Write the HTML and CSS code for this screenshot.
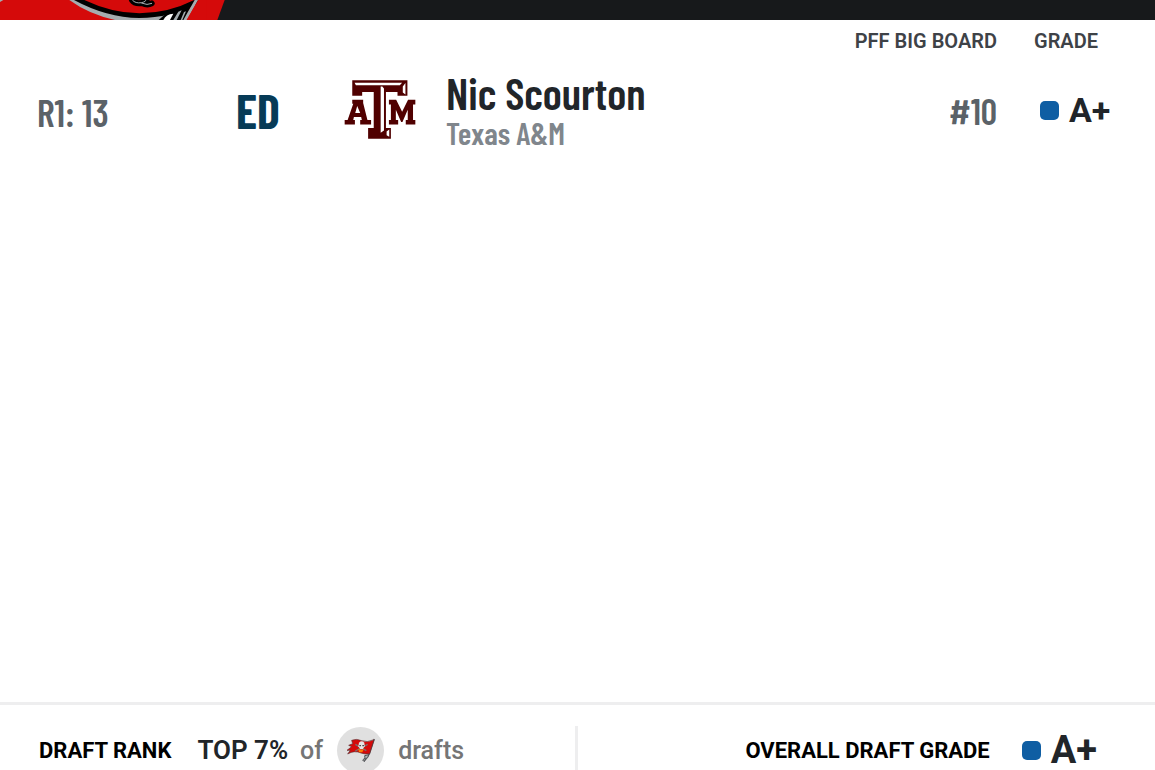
FILE: index.html
```html
<!DOCTYPE html>
<html lang="en">
<head>
<meta charset="UTF-8">
<meta name="viewport" content="width=device-width, initial-scale=1.0">
<title>Mock Draft Results</title>
<link rel="stylesheet" href="styles.css">
</head>
<body>
<header class="banner">
    <svg class="banner-logo" viewBox="0 0 720 60" aria-hidden="true">
        <path fill="#d50a0a" d="M0 0H674L652 60H0Z"/>
        <path fill="#a5acaf" d="M0 0H10L0 6Z"/>
        <path fill="#a5acaf" d="M208 0Q265 42 345 60H480L590 0Z"/>
        <path fill="#000" d="M580 6L552 60H476L492 46Z"/>
        <path fill="#d50a0a" stroke="#000" stroke-width="14" d="M222 -8Q320 46 418 47Q510 46 590 4L600 -20H222Z"/>
        <path fill="none" stroke="#a5acaf" stroke-width="9" d="M591 -3L554 62"/>
        <path fill="#d50a0a" d="M596 -3H620V60H560Z"/>
        <path fill="#fff" d="M490 60Q498 42 520 41L510 60Z"/>
        <path fill="#a5acaf" d="M520 60L535 35L545 31L530 60ZM542 60L552 36L558 34L547 60Z"/>
        <path fill="none" stroke="#000" stroke-width="18" stroke-linecap="round" d="M396 0Q404 12 426 9Q444 5 439 0M426 9Q442 17 455 10"/>
        <path fill="none" stroke="#a5acaf" stroke-width="3" d="M397 0Q406 11 425 8Q440 4 436 0M424 9Q442 17 456 10"/>
    </svg>
</header>

<main class="picks">
<table class="pick-table">
    <thead>
        <tr>
            <td class="col-pick"></td>
            <td class="col-pos"></td>
            <td class="col-logo"></td>
            <td></td>
            <th class="col-board" scope="col">PFF BIG BOARD</th>
            <th class="col-grade" scope="col">GRADE</th>
        </tr>
    </thead>
    <tbody>
        <tr>
            <td class="col-pick pick">R1: 13</td>
            <td class="position">ED</td>
            <td class="school-logo">
                <svg viewBox="26 30 218 179" role="img" aria-label="Texas A&amp;M">
                    <g fill="#500000">
                        <path d="M51 31H218V78H188V66H153V175H168V208H99V175H116V66H81V78H51Z"/>
                        <path fill-rule="evenodd" d="M51 90H84V100L97 151H108V165H75V151H80L78 142H56L54 151H59V165H28V151H37L54 102H51ZM66 109L60 130H75Z"/>
                        <path d="M162 90H184L202 126L220 90H242V104H235V151H242V165H213V151H219V120L203 157H199L183 120V151H190V165H162V151H168V104H162Z"/>
                    </g>
                    <path fill="#fff" d="M58 38H202L195 46H62ZM212 39V74L204 68V50ZM137 50H142L147 56V183L137 190ZM163 180V202L155 197V186Z"/>
                </svg>
            </td>
            <td class="player">
                <div class="player-name">Nic Scourton</div>
                <div class="player-school">Texas A&amp;M</div>
            </td>
            <td class="col-board board-rank">#10</td>
            <td class="col-grade"><div class="grade"><span class="dot"></span>A+</div></td>
        </tr>
    </tbody>
</table>
</main>

<footer class="summary">
    <div class="rank">
        <span class="label">DRAFT RANK</span>
        <span class="top">TOP 7%</span>
        <span class="muted">of</span>
        <span class="team">
            <svg viewBox="0 0 90 74" role="img" aria-label="Tampa Bay Buccaneers">
                <path fill="none" stroke="#55565a" stroke-width="4" d="M85 3L70 48L57 67"/>
                <path fill="#d50a0a" stroke="#5a3033" stroke-width="2" stroke-linejoin="round" d="M17 7Q31 1 47 8Q63 15 84 5L71 47Q57 50 45 45Q25 36 5 48L13 37L3 37L17 26L8 22L20 17Z"/>
                <path stroke="#77706f" stroke-width="4" d="M28 19L61 38M65 19L28 39"/>
                <path fill="#e5e5e5" d="M39 14Q47 6 55 14L56 25L50 34H43L37 25Z"/>
                <path fill="#4c494c" d="M40 21H45V25H40ZM49 21H54V25H49Z"/>
                <path fill="#ff7900" d="M37 32L47 36L54 32L49 43H39Z"/>
                <path fill="#b8babc" stroke="#4c4d50" stroke-width="3" d="M56 53L68 50L65 59L58 62L55 71L50 66L57 60Z"/>
            </svg>
        </span>
        <span class="muted">drafts</span>
    </div>
    <div class="overall">
        <span class="label">OVERALL DRAFT GRADE</span>
        <span class="grade grade-overall"><span class="dot"></span>A+</span>
    </div>
</footer>
</body>
</html>
```
FILE: styles.css
```css
* {
    box-sizing: border-box;
}

body {
    display: flex;
    flex-direction: column;
    height: 100vh;
    margin: 0;
    overflow: hidden;
    font-family: Roboto, sans-serif;
    color: #212529;
    background: #fff;
}

.banner {
    background: #17191b;
}

.banner-logo {
    display: block;
    width: 240px;
}

.picks {
    flex: 1;
}

/* Pick list */
.pick-table {
    width: 100%;
    table-layout: fixed;
    border-collapse: collapse;
}

.pick-table td,
.pick-table th {
    padding: 0;
    text-align: left;
}

.pick-table th {
    height: 50px;
    padding-bottom: 8px;
    font-size: 20px;
    font-weight: 600;
    color: #3e4247;
}

.pick-table .col-pick {
    width: 236px;
    padding-left: 37px;
}

.col-pos {
    width: 108px;
}

.col-logo {
    width: 102px;
}

.pick-table .col-board {
    width: 160px;
    text-align: right;
}

.pick-table .col-grade {
    width: 158px;
    padding-left: 37px;
}

.pick,
.position,
.player,
.board-rank {
    font-family: "Barlow Condensed", "Roboto Condensed", "Liberation Sans Narrow", sans-serif;
    font-weight: 600;
}

.pick,
.board-rank {
    font-size: 38px;
    color: #5b6268;
}

.pick-table .pick {
    padding-top: 4px;
}

.board-rank {
    font-size: 36px;
}

.position {
    font-size: 48px;
    font-weight: 700;
    color: #063b57;
}

.school-logo svg {
    display: block;
    width: 72px;
}

.player-name {
    font-size: 44px;
    line-height: 46px;
}

.player-school {
    font-size: 31px;
    line-height: 34px;
    color: #80868c;
}

.grade {
    display: flex;
    align-items: center;
    gap: 10px;
    padding-left: 6px;
    font-size: 34px;
    font-weight: 700;
}

.dot {
    width: 19px;
    height: 19px;
    border-radius: 5px;
    background: #0f5ea3;
}

/* Bottom bar */
.summary {
    display: grid;
    grid-template-columns: 1fr 1fr;
    padding-top: 21px;
    border-top: 3px solid #eeeeef;
}

.rank,
.overall {
    display: flex;
    align-items: center;
    height: 48px;
    margin-bottom: -4px;
}

.rank {
    padding-left: 39px;
    border-right: 3px solid #eeeeef;
}

.overall {
    justify-content: flex-end;
    gap: 32px;
    padding-right: 58px;
}

.label {
    font-size: 22px;
    font-weight: 700;
    color: #000;
}

.top {
    margin: 0 12px 0 26px;
    font-size: 26px;
    font-weight: 600;
}

.muted {
    font-size: 25px;
    font-weight: 500;
    color: #757575;
}

.team {
    display: flex;
    align-items: center;
    justify-content: center;
    width: 47px;
    height: 47px;
    margin: 0 14px;
    border-radius: 50%;
    background: #e0e0e0;
}

.team svg {
    width: 30px;
}

.grade-overall {
    padding-left: 0;
    font-size: 38px;
}
```
